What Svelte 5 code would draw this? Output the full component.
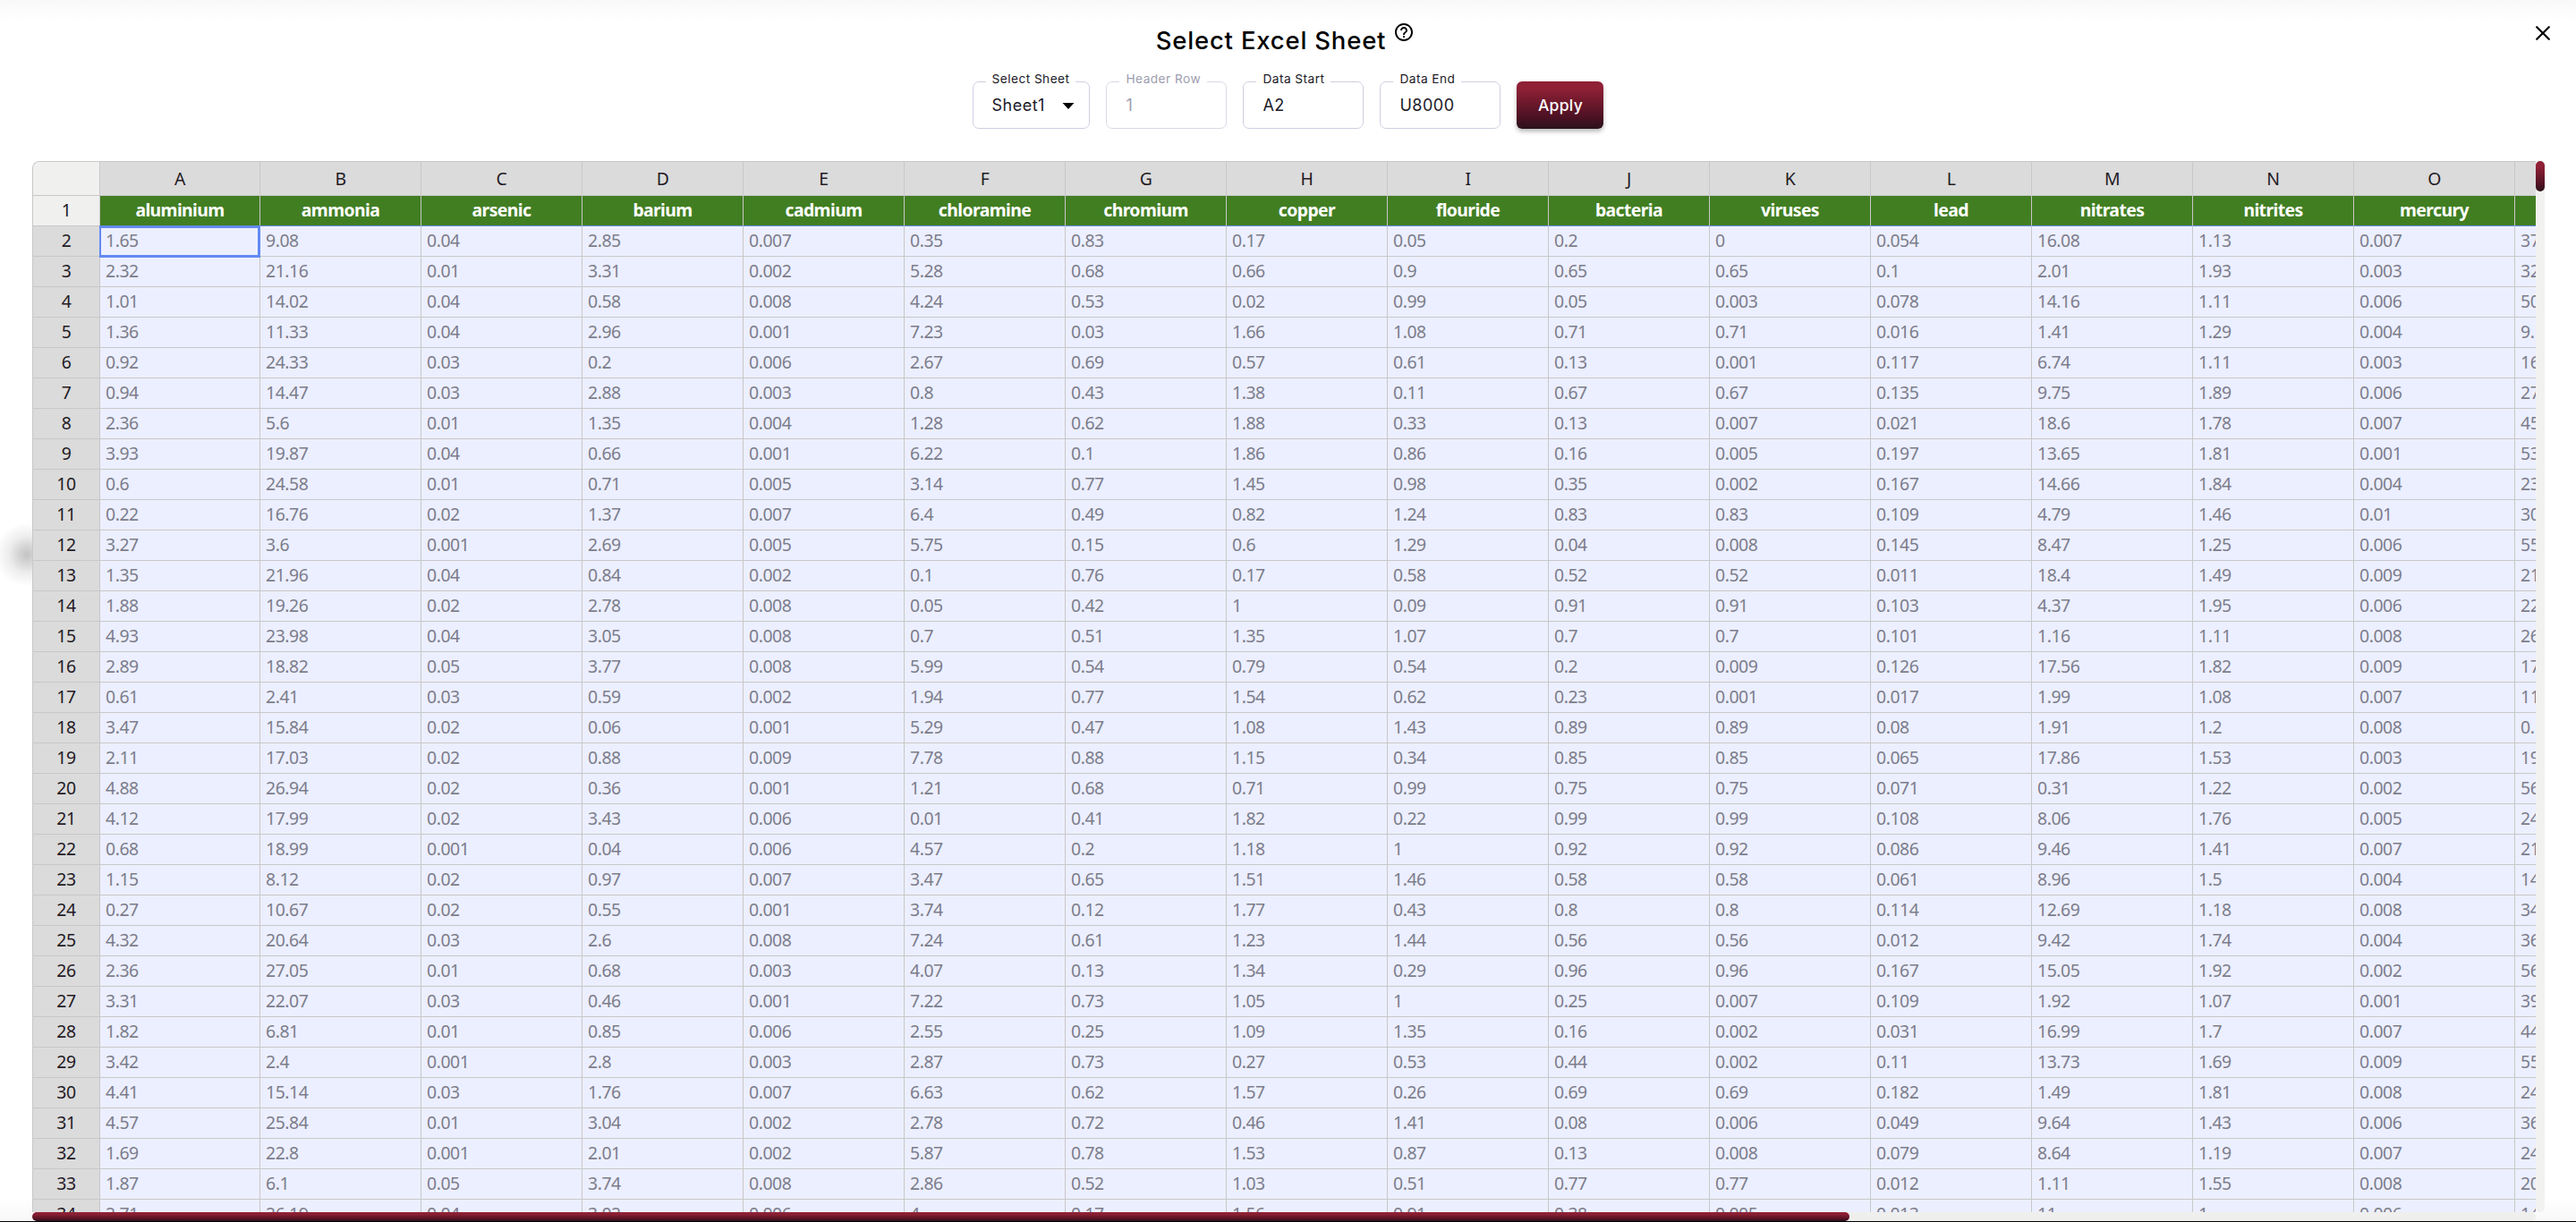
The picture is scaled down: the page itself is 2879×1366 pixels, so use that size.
<script lang="ts">
	type Field = {
		label: string;
		value: string;
		width: number;
		kind?: 'select' | 'disabled';
	};

	const fields: Field[] = [
		{ label: 'Select Sheet', value: 'Sheet1', width: 130, kind: 'select' },
		{ label: 'Header Row', value: '1', width: 135, kind: 'disabled' },
		{ label: 'Data Start', value: 'A2', width: 135 },
		{ label: 'Data End', value: 'U8000', width: 135 }
	];

	const letters = 'ABCDEFGHIJKLMNO'.split('');

	const headers = [
		'aluminium', 'ammonia', 'arsenic', 'barium', 'cadmium', 'chloramine', 'chromium', 'copper',
		'flouride', 'bacteria', 'viruses', 'lead', 'nitrates', 'nitrites', 'mercury'
	];

	// one line per sheet row, starting at row 2
	const data = `
1.65 9.08 0.04 2.85 0.007 0.35 0.83 0.17 0.05 0.2 0 0.054 16.08 1.13 0.007 37
2.32 21.16 0.01 3.31 0.002 5.28 0.68 0.66 0.9 0.65 0.65 0.1 2.01 1.93 0.003 32
1.01 14.02 0.04 0.58 0.008 4.24 0.53 0.02 0.99 0.05 0.003 0.078 14.16 1.11 0.006 50
1.36 11.33 0.04 2.96 0.001 7.23 0.03 1.66 1.08 0.71 0.71 0.016 1.41 1.29 0.004 9.1
0.92 24.33 0.03 0.2 0.006 2.67 0.69 0.57 0.61 0.13 0.001 0.117 6.74 1.11 0.003 16
0.94 14.47 0.03 2.88 0.003 0.8 0.43 1.38 0.11 0.67 0.67 0.135 9.75 1.89 0.006 27
2.36 5.6 0.01 1.35 0.004 1.28 0.62 1.88 0.33 0.13 0.007 0.021 18.6 1.78 0.007 45
3.93 19.87 0.04 0.66 0.001 6.22 0.1 1.86 0.86 0.16 0.005 0.197 13.65 1.81 0.001 53
0.6 24.58 0.01 0.71 0.005 3.14 0.77 1.45 0.98 0.35 0.002 0.167 14.66 1.84 0.004 23
0.22 16.76 0.02 1.37 0.007 6.4 0.49 0.82 1.24 0.83 0.83 0.109 4.79 1.46 0.01 30
3.27 3.6 0.001 2.69 0.005 5.75 0.15 0.6 1.29 0.04 0.008 0.145 8.47 1.25 0.006 55
1.35 21.96 0.04 0.84 0.002 0.1 0.76 0.17 0.58 0.52 0.52 0.011 18.4 1.49 0.009 21
1.88 19.26 0.02 2.78 0.008 0.05 0.42 1 0.09 0.91 0.91 0.103 4.37 1.95 0.006 22
4.93 23.98 0.04 3.05 0.008 0.7 0.51 1.35 1.07 0.7 0.7 0.101 1.16 1.11 0.008 26
2.89 18.82 0.05 3.77 0.008 5.99 0.54 0.79 0.54 0.2 0.009 0.126 17.56 1.82 0.009 17
0.61 2.41 0.03 0.59 0.002 1.94 0.77 1.54 0.62 0.23 0.001 0.017 1.99 1.08 0.007 11
3.47 15.84 0.02 0.06 0.001 5.29 0.47 1.08 1.43 0.89 0.89 0.08 1.91 1.2 0.008 0.1
2.11 17.03 0.02 0.88 0.009 7.78 0.88 1.15 0.34 0.85 0.85 0.065 17.86 1.53 0.003 19
4.88 26.94 0.02 0.36 0.001 1.21 0.68 0.71 0.99 0.75 0.75 0.071 0.31 1.22 0.002 56
4.12 17.99 0.02 3.43 0.006 0.01 0.41 1.82 0.22 0.99 0.99 0.108 8.06 1.76 0.005 24
0.68 18.99 0.001 0.04 0.006 4.57 0.2 1.18 1 0.92 0.92 0.086 9.46 1.41 0.007 21
1.15 8.12 0.02 0.97 0.007 3.47 0.65 1.51 1.46 0.58 0.58 0.061 8.96 1.5 0.004 14
0.27 10.67 0.02 0.55 0.001 3.74 0.12 1.77 0.43 0.8 0.8 0.114 12.69 1.18 0.008 34
4.32 20.64 0.03 2.6 0.008 7.24 0.61 1.23 1.44 0.56 0.56 0.012 9.42 1.74 0.004 36
2.36 27.05 0.01 0.68 0.003 4.07 0.13 1.34 0.29 0.96 0.96 0.167 15.05 1.92 0.002 56
3.31 22.07 0.03 0.46 0.001 7.22 0.73 1.05 1 0.25 0.007 0.109 1.92 1.07 0.001 39
1.82 6.81 0.01 0.85 0.006 2.55 0.25 1.09 1.35 0.16 0.002 0.031 16.99 1.7 0.007 44
3.42 2.4 0.001 2.8 0.003 2.87 0.73 0.27 0.53 0.44 0.002 0.11 13.73 1.69 0.009 55
4.41 15.14 0.03 1.76 0.007 6.63 0.62 1.57 0.26 0.69 0.69 0.182 1.49 1.81 0.008 24
4.57 25.84 0.01 3.04 0.002 2.78 0.72 0.46 1.41 0.08 0.006 0.049 9.64 1.43 0.006 36
1.69 22.8 0.001 2.01 0.002 5.87 0.78 1.53 0.87 0.13 0.008 0.079 8.64 1.19 0.007 24
1.87 6.1 0.05 3.74 0.008 2.86 0.52 1.03 0.51 0.77 0.77 0.012 1.11 1.55 0.008 20
2.71 26.19 0.04 3.02 0.006 4 0.17 1.56 0.91 0.38 0.005 0.013 11 1 0.006 14`;

	const rows = data.trim().split('\n').map((line) => line.split(' '));

	// the active cell is A2
	let selectedRow = $state(0);
	let selectedCol = $state(0);

	function selectCell(r: number, c: number) {
		selectedRow = r;
		selectedCol = c;
	}
</script>

<div class="dialog">
	<div class="knob"></div>

	<header class="toolbar">
		<div class="title-row">
			<h1>Select Excel Sheet</h1>
			<svg class="help" viewBox="0 0 24 24" width="24" height="24">
				<path
					d="M11 18h2v-2h-2v2zm1-16C6.48 2 2 6.48 2 12s4.48 10 10 10 10-4.48 10-10S17.52 2 12 2zm0 18c-4.41 0-8-3.59-8-8s3.59-8 8-8 8 3.59 8 8-3.59 8-8 8zm0-14c-2.21 0-4 1.79-4 4h2c0-1.1.9-2 2-2s2 .9 2 2c0 2-3 1.75-3 5h2c0-2.25 3-2.5 3-5 0-2.21-1.79-4-4-4z"
				/>
			</svg>
		</div>

		<div class="controls">
			{#each fields as field}
				<fieldset
					class="field"
					class:disabled={field.kind === 'disabled'}
					style={`width: ${field.width}px`}
				>
					<legend>{field.label}</legend>
					<span class="value">{field.value}</span>
					{#if field.kind === 'select'}
						<svg class="arrow" viewBox="0 0 14 7" width="14" height="7">
							<path d="M0.5 0h13L7 7z" />
						</svg>
					{/if}
				</fieldset>
			{/each}
			<button class="apply">Apply</button>
		</div>

		<button class="close" aria-label="Close">
			<svg viewBox="0 0 16 16" width="16" height="16">
				<path d="M1.2 1.2l13.6 13.6M14.8 1.2L1.2 14.8" />
			</svg>
		</button>
	</header>

	<div class="sheet-area">
		<div class="sheet">
			<div class="row letters">
				<div class="corner"></div>
				{#each letters as letter}
					<div class="cell letter">{letter}</div>
				{/each}
				<div class="cell letter"></div>
			</div>

			<div class="row names">
				<div class="index light">1</div>
				{#each headers as name}
					<div class="cell name">{name}</div>
				{/each}
				<div class="cell name"></div>
			</div>

			{#each rows as row, r}
				<div class="row">
					<div class="index">{r + 2}</div>
					{#each row as value, c}
						<!-- svelte-ignore a11y_click_events_have_key_events, a11y_no_static_element_interactions -->
						<div
							class="cell"
							class:selected={r === selectedRow && c === selectedCol}
							onclick={() => selectCell(r, c)}
						>
							{value}
						</div>
					{/each}
				</div>
			{/each}
		</div>
		<div class="track-y"><div class="thumb-y"></div></div>
		<div class="track-x"><div class="thumb-x"></div></div>
	</div>
</div>

<style>
	:global(body) {
		background: #fff;
		overflow: hidden;
	}

	.dialog {
		position: relative;
		box-sizing: border-box;
		width: 2879px;
		height: 1366px;
		display: flex;
		flex-direction: column;
		overflow: hidden;
		border-bottom: 1px solid #000;
		background:
			linear-gradient(to bottom, #f8f8f8, #fcfcfc 12px, #fff 24px) top / 100% 24px no-repeat,
			linear-gradient(to top, #f8f8f8, #fff) bottom / 100% 26px no-repeat,
			#fff;
		font-family: Inter, 'Noto Sans', sans-serif;
		color: #000;
	}

	/* blurred drag handle that peeks out from behind the sheet */
	.knob {
		position: absolute;
		left: -6px;
		top: 584px;
		width: 72px;
		height: 72px;
		background: radial-gradient(circle, #c4c4c4 0, #d4d4d4 18%, #ededed 40%, #fff 70%);
	}

	/* TOP BAR */
	.toolbar {
		position: relative;
		height: 180px;
		flex: none;
		display: flex;
		flex-direction: column;
		align-items: center;
	}

	.title-row {
		display: flex;
		align-items: flex-start;
		gap: 8px;
		height: 59px;
		padding-top: 24px;
		padding-right: 6px;
		box-sizing: border-box;
	}

	h1 {
		margin: 0;
		font-size: 27.5px;
		line-height: 42px;
		font-weight: 550;
		letter-spacing: 0.8px;
		white-space: nowrap;
	}

	.controls {
		display: flex;
		align-items: flex-end;
		gap: 18px;
		height: 85px;
	}

	.field {
		box-sizing: border-box;
		height: 61px;
		margin: 0;
		padding: 0 15px 6px 21px;
		border: 1px solid #cdd0e2;
		border-radius: 7px;
		display: flex;
		align-items: center;
		justify-content: space-between;
		color: #1c1a28;
	}

	.field legend {
		margin-left: -7px;
		padding: 0 7px;
		height: 16px;
		font-size: 13.7px;
		line-height: 11px;
		letter-spacing: 0.45px;
		white-space: nowrap;
	}

	.value {
		font-size: 18px;
		line-height: 24px;
		letter-spacing: 0.5px;
	}

	.field.disabled {
		border-color: #d8dae4;
		color: #9d9eae;
	}

	.arrow {
		margin-right: 1px;
	}

	.apply {
		width: 97px;
		height: 53px;
		padding: 0;
		border: 0;
		border-radius: 6px;
		background: linear-gradient(#8f2035 15%, #4c1123 75%, #2a121c);
		box-shadow: 0 3px 5px rgba(0, 0, 0, 0.28);
		color: #fff;
		font: 500 17.5px Inter, sans-serif;
		letter-spacing: 0.3px;
	}

	.close {
		position: absolute;
		right: 29px;
		top: 29px;
		width: 16px;
		height: 16px;
		padding: 0;
		border: 0;
		background: none;
	}

	.close svg {
		display: block;
		stroke: #000;
		stroke-width: 2.2;
		stroke-linecap: round;
	}

	/* SHEET */
	.sheet-area {
		width: 2808px;
		height: 1185px;
		margin-left: 36px;
		display: grid;
		grid-template-columns: 2798px 10px;
		grid-template-rows: 1175px 10px;
		position: relative;
	}

	.sheet {
		overflow: hidden;
		box-sizing: border-box;
		border-top: 1px solid #c8c8c8;
		border-left: 1px solid #c8c8c8;
		border-top-left-radius: 8px;
		background: #ecefff;
		font-family: 'Noto Sans', 'Open Sans', sans-serif;
		font-size: 19.4px;
		letter-spacing: -0.45px;
		color: #7c7d8b;
	}

	.row {
		display: flex;
		width: max-content;
		height: 34px;
	}

	.row.letters {
		height: 38px;
	}

	.corner,
	.index,
	.cell {
		box-sizing: border-box;
		flex: none;
		border-right: 1px solid #c8c8c8;
		border-bottom: 1px solid #c8c8c8;
	}

	.corner,
	.index {
		width: 75px;
	}

	.index {
		background: #dbdbdb;
		color: #231a24;
		text-align: center;
		line-height: 31px;
	}

	.corner,
	.index.light {
		background: #f0f0ef;
	}

	.cell {
		position: relative;
		width: 180px;
		padding-left: 6px;
		line-height: 31px;
		white-space: nowrap;
	}

	/* column A is one pixel narrower than the rest */
	.cell:nth-child(2) {
		width: 179px;
	}

	.cell.letter {
		padding: 0;
		background: #dbdbdb;
		color: #231a24;
		text-align: center;
		line-height: 37px;
	}

	.cell.name {
		padding: 0;
		background: #417e22;
		border-bottom-color: #6389f2;
		color: #fff;
		font-weight: 700;
		letter-spacing: -0.6px;
		text-align: center;
	}

	.cell.selected {
		z-index: 1;
	}

	.cell.selected::after {
		content: '';
		position: absolute;
		inset: -1px -1px -2px -1px;
		border: solid #6389f2;
		border-width: 3px 3px 3px 2px;
	}

	/* SCROLLBARS */
	.track-y {
		background: #f2f2f1;
		border-radius: 5px;
	}

	.thumb-y {
		height: 34px;
		border-radius: 5px;
		background: linear-gradient(#8f2035 20%, #4c1123 80%, #2a121c);
	}

	.track-x {
		background: #efefee;
		border-radius: 5px;
	}

	.thumb-x {
		width: 2031px;
		height: 10px;
		border-radius: 5px;
		background: linear-gradient(#8f2035 20%, #4c1123 80%, #2a121c);
	}
</style>
